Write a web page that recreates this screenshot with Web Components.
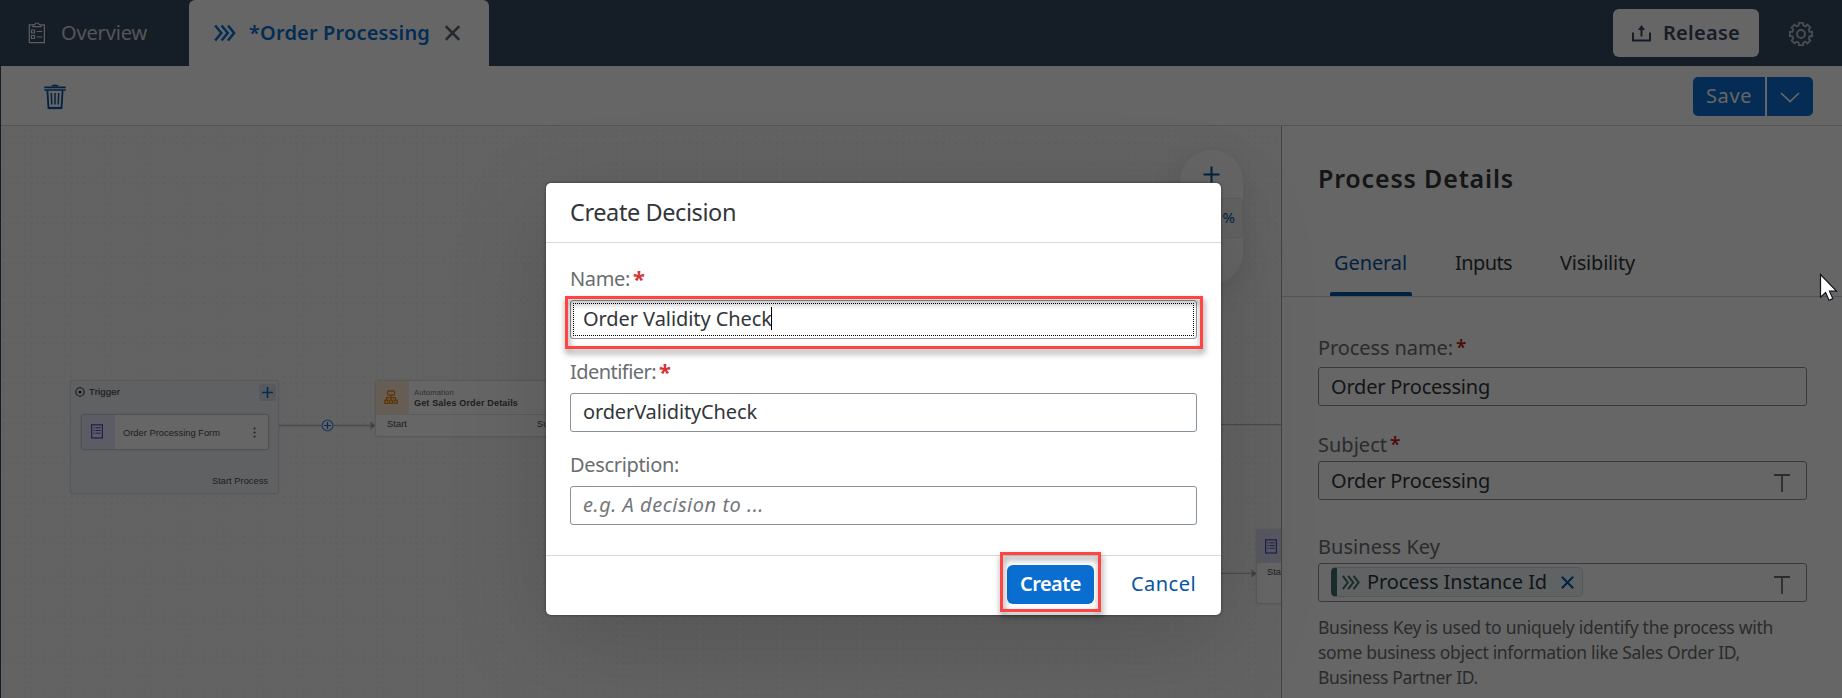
<!DOCTYPE html>
<html lang="en">
<head>
<meta charset="utf-8">
<title>Order Processing</title>
<style>
html,body{margin:0;height:100%;overflow:hidden}
body{font-family:"Noto Sans",Roboto,sans-serif;font-size:20px;line-height:24px;color:#32363a;background:#fff}
</style>
</head>
<body>
<process-app></process-app>
<script>
const define = (name, html, setup) => {
  const tpl = document.createElement('template');
  tpl.innerHTML = html;
  customElements.define(name, class extends HTMLElement {
    connectedCallback() {
      if (this.shadowRoot) return;
      const root = this.attachShadow({ mode: 'open' });
      root.appendChild(tpl.content.cloneNode(true));
      if (setup) setup(this, root);
    }
  });
};

/* Page skeleton */
define('process-app', `
<style>
:host{display:flex;flex-direction:column;height:698px;width:1842px;overflow:hidden;position:relative}
.main{display:flex;flex:1;min-height:0}
.body{display:flex;flex-direction:column;flex:1;min-height:0;border-left:1px solid #354a5f}
.cursor{position:absolute;left:1819px;top:273px}
</style>
<app-header></app-header>
<div class="body">
  <app-toolbar></app-toolbar>
  <div class="main"><flow-canvas></flow-canvas><details-panel></details-panel></div>
</div>
<decision-dialog></decision-dialog>
<svg class="cursor" width="20" height="30" viewBox="0 0 20 30"><path d="M1.5 1.5V24.2L6.6 19.5L10 27.3L13.8 25.6L10.5 18.2H17.5Z" fill="#fff" stroke="#10131c" stroke-width="1.2"/></svg>
`);

define('app-header', `
<style>
:host{display:flex;align-items:center;height:66px;background:#354a5f;color:#d1e0ee;flex:none}
.ov{display:flex;align-items:center;width:161px;padding-left:28px;gap:15px}
.ov svg{display:block}
.tab{display:flex;align-items:center;box-sizing:border-box;width:300px;height:66px;background:#fff;border-radius:6px 6px 0 0;color:#0a6ed1;font-weight:600;padding-left:25px}
.tab .t{margin-left:13px;width:180px}
.tab .x{margin-left:16px}
.rel{display:flex;align-items:center;box-sizing:border-box;width:146px;height:48px;background:#fff;border-radius:6px;color:#354a5f;font-weight:600;margin-left:auto;padding-left:19px;gap:12px}
.gear{margin:1px 28px 0 29px}
fit-text{color:inherit}
.ov fit-text{color:#d5d5d5}
</style>
<div class="ov">
 <svg width="18" height="22" viewBox="0 0 18 22" fill="none" stroke="#e8e8e8" stroke-width="1.2"><path d="M5 2.8H1.3V20.6H16.4V2.8H13"/><path d="M5 4.6V3.2L7 2.4C7.3 .5 10.6 .5 11 2.4L13 3.2V4.6Z"/><path d="M3.5 8h3v3h-3zM3.5 13.5h3v3h-3zM8.7 9.5h5.5M8.7 15h5.5"/></svg>
 <fit-text w="86">Overview</fit-text>
</div>
<div class="tab">
 <svg width="22" height="18" viewBox="0 0 22 18" fill="none" stroke="#0a6ed1" stroke-width="2.5"><path d="M1.2 1.5L7.3 9L1.2 16.5M7.6 1.5L13.7 9L7.6 16.5M14 1.5L20.1 9L14 16.5"/></svg>
 <span class="t"><fit-text w="181">*Order Processing</fit-text></span>
 <svg class="x" width="15" height="16" viewBox="0 0 15 16" stroke="#5b6873" stroke-width="2.5"><path d="M.8 1.2L14.2 14.8M14.2 1.2L.8 14.8"/></svg>
</div>
<div class="rel">
 <svg width="19" height="17" viewBox="0 0 19 17" fill="none" stroke="#354a5f" stroke-width="2"><path d="M1 7.5V15.6H18V7.5M9.5 11.5V3"/><path d="M9.5 0L13 5H6Z" fill="#354a5f" stroke="none"/></svg>
 <fit-text w="77">Release</fit-text>
</div>
<svg class="gear" width="26" height="26" viewBox="-13 -13 26 26" fill="none" stroke="#b4c0ce" stroke-width="1.8" stroke-linejoin="round"><g id="g"></g><circle r="4" stroke-width="2"/></svg>
`, (host, root) => {
  const pts = [];
  for (let i = 0; i < 8; i++) {
    const a = i * Math.PI / 4;
    for (const [d, r] of [[-.25, 8.9], [-.2, 11.4], [.2, 11.4], [.25, 8.9]])
      pts.push((Math.cos(a + d) * r).toFixed(2) + ' ' + (Math.sin(a + d) * r).toFixed(2));
  }
  const p = document.createElementNS('http://www.w3.org/2000/svg', 'path');
  p.setAttribute('d', 'M' + pts.join('L') + 'Z');
  root.getElementById('g').appendChild(p);
});

define('app-toolbar', `
<style>
:host{display:flex;align-items:center;height:59px;border-bottom:1px solid #d5d5d5;flex:none;background:#fff;padding:0 29px 0 43px}
svg{display:block}
.bin{margin-top:2px}
.r{display:flex;gap:2px;margin-left:auto;margin-top:2px;color:#fff}
.s,.d{display:flex;align-items:center;justify-content:center;height:39px;background:#0a6ed1}
.s{width:72px;border-radius:5px 0 0 5px}
.d{width:46px;border-radius:0 5px 5px 0}
</style>
<svg class="bin" width="22" height="26" viewBox="0 0 22 26" fill="none" stroke="#0854a0" stroke-width="1.8"><path d="M8 2.3C8.4 1 13.6 1 14 2.3" /><path d="M.3 3.3H21.7M.3 6H21.7" stroke-width="1.7"/><path d="M3.4 6.5L4.5 24H17.5L18.6 6.5"/><path d="M4.5 24H17.5" stroke-width="2.2"/><path d="M7.3 9L7.8 20.5M11 9V20.5M14.7 9L14.2 20.5" stroke-width="1.5"/></svg>
<div class="r"><div class="s"><fit-text w="46" style="margin-top:-1px">Save</fit-text></div><div class="d"><svg width="20" height="11" viewBox="0 0 20 11" fill="none" stroke="#fff" stroke-width="1.7" style="margin-top:2px"><path d="M1 1L10 9.6L19 1"/></svg></div></div>
`);

/* Modelling canvas: nodes sit at free positions */
define('flow-canvas', `
<style>
:host{display:block;position:relative;width:1280px;height:572px;overflow:hidden;flex:none;
background:radial-gradient(circle at 3.3px 4.3px,#e4e4e4 .4px,transparent 1px) 0 0/6.67px 6.67px,#f7f7f7;
font-family:"Liberation Sans",Arial,sans-serif;font-size:9.3px;line-height:11px;color:#4a4e52}
.n{position:absolute;box-sizing:border-box;background:#fff;border:1px solid #dcdfe3;border-radius:3px;box-shadow:0 0 2px rgba(0,0,0,.12)}
.trigger{left:69px;top:254px;width:209px;height:114px;background:#eff3f8;display:flex;flex-direction:column;border-color:#d6dce4}
.hd{display:flex;align-items:center;height:22px;padding:0 2px 0 4px;gap:4px;flex:none}
.hd .p{margin-left:auto;width:17px;height:17px;background:#d9dee5;border-radius:2px;display:flex;align-items:center;justify-content:center}
.form{display:flex;align-items:center;height:36px;margin:11px 9px 0 10px;border:1px solid #c5cad1;border-radius:3px;background:#fff;box-sizing:border-box;overflow:hidden;flex:none;box-shadow:0 0 2px rgba(0,0,0,.2)}
.ic{display:flex;align-items:center;justify-content:center;width:33px;height:100%;background:#e4e6fa;flex:none}
.form .ic{padding:0 3px 2px 0;box-sizing:border-box}
.form fit-text{margin-left:8px;margin-top:2px}
.form .m{margin-left:auto;margin-right:12px}
.sp{margin:26px 10px 0 auto}
.auto{left:374px;top:254px;width:300px;height:57px;overflow:hidden}
.at{display:flex;height:33px;border-bottom:1px solid #e3e3e3}
.or{display:flex;align-items:center;justify-content:center;width:33px;background:#ffecd2;box-sizing:border-box;padding-right:4px}
.tt{margin:6px 0 0 5px;display:flex;flex-direction:column;line-height:11px}
.tt .k{font-size:7.6px;color:#74777a}
.io{display:flex;padding:4px 0 0 11px;line-height:11px}
.io .o{margin-left:130px}
.last{left:1255px;top:403px;width:70px;height:75px;overflow:hidden}
.last .ic{width:100%;height:33px;justify-content:flex-start;padding-left:8px;background:#dcdcf2}
.last .l{padding:4px 0 0 10px;line-height:11px}
.w{position:absolute;left:0;top:0}
.z{position:absolute;left:1179px;top:24px;width:63px;height:134px;border-radius:32px;background:#fcfcfc;box-shadow:0 5px 30px rgba(34,53,72,.13);color:#0854a0;font:15px "Noto Sans",Roboto,sans-serif;display:flex;flex-direction:column;align-items:center}
.z svg{margin-top:16px;flex:none}
.z div{box-sizing:border-box;width:63px;height:40px;margin-top:15px;background:#f4f4f4;border:1px solid #e9e9e9;border-radius:4px;display:flex;align-items:center;justify-content:flex-end;padding:0 7px 2px 0}
</style>
<svg class="w" width="1280" height="572" viewBox="1 126 1280 572" fill="none" stroke="#b4b8bc" stroke-width="1.3"><path d="M279 425.5H321M334 425.5H372M1180 424.7H1281M1180 573.4H1253"/><path d="M371 422.5L375 425.5L371 428.5ZM1252 570.5L1256 573.4L1252 576.5Z" fill="#8f9398"/><circle cx="327.5" cy="425.5" r="5.4" stroke="#5598dc" stroke-width="1.4"/><path d="M324 425.5H331M327.500 422V429" stroke="#0a6ed1" stroke-width="1.2"/></svg>
<div class="n trigger">
 <div class="hd"><svg width="10" height="10" viewBox="0 0 10 10" fill="none" stroke="#32363a" stroke-width="1.1"><circle cx="5" cy="5" r="4.2"/><circle cx="5" cy="5" r="1.5" fill="#32363a" stroke="none"/></svg><fit-text w="31" style="-webkit-text-stroke:.2px;font-size:9.6px;margin-top:-1px">Trigger</fit-text><span class="p"><svg width="11" height="11" viewBox="0 0 11 11" stroke="#0a6ed1" stroke-width="1.6"><path d="M0 5.500H11M5.500 0V11"/></svg></span></div>
 <div class="form"><span class="ic"><form-icon></form-icon></span><fit-text w="97">Order Processing Form</fit-text><svg class="m" width="3" height="11" viewBox="0 0 3 11" fill="#5b6066"><circle cx="1.500" cy="1.500" r="1.100"/><circle cx="1.500" cy="5.500" r="1.100"/><circle cx="1.500" cy="9.500" r="1.100"/></svg></div>
 <div class="sp"><fit-text w="56">Start Process</fit-text></div>
</div>
<div class="n auto"><div class="at"><span class="or"><svg width="14" height="15" viewBox="0 0 14 15" fill="none" stroke="#e9890c" stroke-width="1.300"><rect x="3.500" y="1" width="7" height="4" rx="1"/><path d="M7 5V10M2.500 10V7.700H11.500V10"/><rect x=".8" y="10.300" width="3" height="3"/><rect x="5.500" y="10.300" width="3" height="3"/><rect x="10.200" y="10.300" width="3" height="3"/></svg></span><div class="tt"><fit-text class="k" w="40">Automation</fit-text><fit-text w="104" style="font-weight:700;font-size:9px">Get Sales Order Details</fit-text></div></div><div class="io"><fit-text w="20">Start</fit-text><span class="o">Su</span></div></div>
<div class="n last"><div class="ic"><form-icon></form-icon></div><div class="l">Sta</div></div>
<div class="z"><svg width="17" height="17" viewBox="0 0 17 17" stroke="#0854a0" stroke-width="2"><path d="M.5 8.500H16.500M8.500 .5V16.500"/></svg><div>%</div></div>
`);

define('form-icon', `
<style>:host{display:block;width:12px;height:15px}svg{display:block}</style>
<svg width="12" height="15" viewBox="0 0 12 15" fill="none" stroke="#4b4bc8" stroke-width="1.2"><rect x=".6" y=".8" width="10.800" height="13.200"/><path d="M2.300 3.800H3.500M4.500 3.800H9.700M2.300 6.500H3.500M4.500 6.500H9.700M2.300 9.200H3.500M4.500 9.200H9.700" stroke-width="1"/></svg>
`);

define('details-panel', `
<style>
:host{display:flex;flex-direction:column;box-sizing:border-box;width:561px;height:572px;border-left:1px solid #a8a8a8;background:#fff;overflow:hidden}
h2{margin:32px 0 0 36px;font-size:25px;line-height:40px;height:40px;font-weight:600;flex:none}
.tabs{display:flex;align-items:center;height:66px;margin-top:32px;padding-left:48px;border-bottom:1px solid #d5d5d5;flex:none;box-sizing:content-box}
.tabs span{display:flex;align-items:center;height:66px;box-sizing:border-box;padding:0 5px 0 4px;position:relative}
.tabs .a{color:#0854a0}
.tabs .a::after{content:"";position:absolute;left:0;right:0;bottom:0;height:4px;background:#0854a0;border-radius:2px 2px 0 0}
.tabs .b{margin-left:39px}
.f{margin:0 35px 0 36px;display:flex;flex-direction:column;flex:none}
.l{display:flex;align-items:center;height:24px;color:#6a6d70;gap:3px}
.l i{font-style:normal;font-weight:600;color:#c02020;font-size:19px;margin-top:-3px}
.i{display:flex;align-items:center;box-sizing:border-box;height:39px;border:1px solid #89919a;border-radius:3px;padding:0 16px 0 12px}
.i svg.t{margin-left:auto;margin-top:4px}
.tok{display:flex;align-items:center;box-sizing:border-box;width:252px;height:30px;border:1px solid #cfdcda;border-left:6px solid #3f6b69;border-radius:5px;background:#f0f8f7;padding-left:5px;margin-top:-1px}
.tok fit-text{margin:0 14px 0 7px}
.help{font-size:17.5px;line-height:25px;color:#6a6d70;margin-top:13px;display:flex;flex-direction:column;align-items:flex-start}
</style>
<h2><fit-text w="196">Process Details</fit-text></h2>
<div class="tabs"><span class="a"><fit-text w="73">General</fit-text></span><span class="b"><fit-text w="57">Inputs</fit-text></span><span class="b"><fit-text w="75">Visibility</fit-text></span></div>
<div class="f" style="margin-top:39px"><div class="l"><fit-text w="135">Process name:</fit-text><i>*</i></div><div class="i" style="margin-top:7px"><fit-text w="159">Order Processing</fit-text></div></div>
<div class="f" style="margin-top:27px"><div class="l"><fit-text w="69">Subject</fit-text><i>*</i></div><div class="i" style="margin-top:4px"><fit-text w="159">Order Processing</fit-text><svg class="t" width="16" height="18" viewBox="0 0 16 18" stroke="#6a7178" stroke-width="1.800" fill="none"><path d="M0 1H16M8 1V18"/></svg></div></div>
<div class="f" style="margin-top:35px"><div class="l"><fit-text w="122">Business Key</fit-text></div><div class="i" style="margin-top:4px"><div class="tok"><svg width="18" height="15" viewBox="0 0 18 15" fill="none" stroke="#3f6b69" stroke-width="2"><path d="M.8 .8L5.800 7.500L.8 14.200M6.200 .8L11.200 7.500L6.200 14.200M11.600 .8L16.600 7.500L11.600 14.200"/></svg><fit-text w="180">Process Instance Id</fit-text><svg width="13" height="13" viewBox="0 0 13 13" stroke="#0854a0" stroke-width="2"><path d="M.8 .8L12.200 12.200M12.200 .8L.8 12.200"/></svg></div><svg class="t" width="16" height="18" viewBox="0 0 16 18" stroke="#6a7178" stroke-width="1.800" fill="none"><path d="M0 1H16M8 1V18"/></svg></div>
<div class="help"><fit-text w="455">Business Key is used to uniquely identify the process with</fit-text><fit-text w="422">some business object information like Sales Order ID,</fit-text><fit-text w="160">Business Partner ID.</fit-text></div></div>
`);

define('form-field', `
<style>
:host{display:block;height:93px;position:relative}
.l{display:flex;align-items:center;height:24px;color:#6a6d70;gap:3px}
.l i{font-style:normal;font-weight:700;color:#d33636;font-size:22px;margin-top:-3px;display:none}
:host([required]) .l i{display:block}
.i{position:relative;display:flex;align-items:center;box-sizing:border-box;height:39px;margin-top:9px;border:1px solid #89919a;border-radius:3px;padding:0 0 2px 12px}
:host([focused]) .i::after{content:"";position:absolute;inset:2px 2px 2px 2px;border:1px dotted #000}
.c{display:none;width:1px;height:23px;background:#000;margin-left:-1px}
:host([focused]) .c{display:block}
:host([hint]) .i{font-style:italic;color:#74777a}
</style>
<div class="l"><slot name="label"></slot><i>*</i></div><div class="i"><slot></slot><span class="c"></span></div>
`);

/* Red frame that lies over a control */
define('mark-frame', `
<style>:host{position:absolute;box-sizing:border-box;border:3px solid #ff4444;filter:drop-shadow(1px 4px 3px rgba(0,0,0,.5));z-index:2}</style>
`);

define('decision-dialog', `
<style>
:host{position:absolute;inset:0;background:rgba(0,0,0,.6)}
.d{position:absolute;left:546px;top:183px;width:675px;height:432px;background:#fff;border-radius:5px;display:flex;flex-direction:column;box-shadow:0 0 3px rgba(0,0,0,.5),0 25px 100px rgba(0,0,0,.15)}
.h{display:flex;align-items:center;box-sizing:border-box;height:60px;border-bottom:1px solid #d9d9d9;padding:0 0 2px 24px;font-size:23.5px;flex:none}
.b{padding:24px 24px 0;flex:1}
.f{display:flex;align-items:center;justify-content:flex-end;box-sizing:border-box;height:60px;border-top:1px solid #d9d9d9;padding:0 25px 2px 0;flex:none}
.c{position:relative;display:flex;align-items:center;justify-content:center;box-sizing:border-box;padding-bottom:2px;width:87px;height:39px;border-radius:6px;background:#0a6ed1;color:#fff;font-weight:600;margin-right:37px}
.x{color:#0854a0;margin-top:-2px}
</style>
<div class="d">
 <div class="h"><fit-text w="166">Create Decision</fit-text></div>
 <div class="b">
  <form-field required focused><fit-text slot="label" w="60">Name:</fit-text><fit-text w="189">Order Validity Check</fit-text></form-field>
  <form-field required><fit-text slot="label" w="86">Identifier:</fit-text><fit-text w="174">orderValidityCheck</fit-text></form-field>
  <form-field hint><fit-text slot="label" w="109">Description:</fit-text><fit-text w="181">e.g. A decision to ...</fit-text></form-field>
 </div>
 <div class="f"><div class="c"><fit-text w="61">Create</fit-text></div><fit-text class="x" w="65">Cancel</fit-text></div>
 <mark-frame style="left:19px;top:113px;width:638px;height:53px"></mark-frame>
 <mark-frame style="left:454px;top:369px;width:101px;height:60px"></mark-frame>
</div>
`);

/* Single-line text tracked to the given width */
define('fit-text', `<style>:host{display:inline-block;white-space:nowrap}</style><slot></slot>`, host => {
  const w = +host.getAttribute('w');
  const r = document.createRange();
  r.selectNodeContents(host);
  const natural = r.getBoundingClientRect().width;
  host.style.letterSpacing = ((w - natural) / host.textContent.length).toFixed(3) + 'px';
});
</script>
</body>
</html>
